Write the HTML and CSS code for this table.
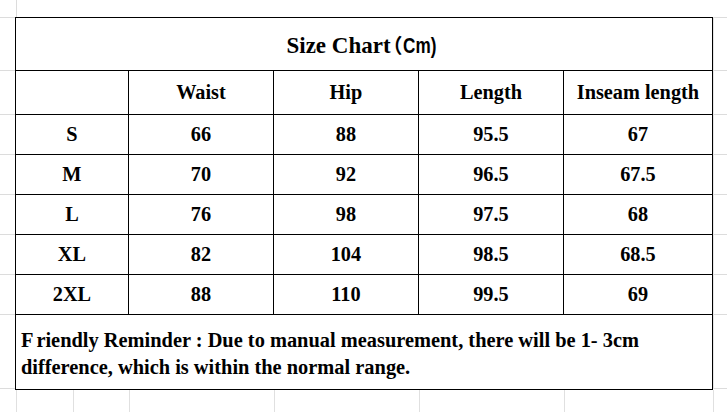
FILE: index.html
```html
<!DOCTYPE html>
<html lang="en">

<head>
    <meta charset="UTF-8">
    <meta name="viewport" content="width=device-width, initial-scale=1.0">
    <title>Size Chart</title>
    <link rel="stylesheet" href="styles.css">
</head>

<body>
    <div class="sheet">
        <div class="top-strip">
            <div class="gap"></div>
            <div class="line"></div>
        </div>

        <div class="middle">
            <div class="gutter left">
                <div class="g title-h"></div>
                <div class="g head-h"></div>
                <div class="g row-h"></div>
                <div class="g row-h"></div>
                <div class="g row-h"></div>
                <div class="g row-h"></div>
                <div class="g row-h"></div>
                <div class="g note-h"></div>
            </div>

            <table class="chart">
                <colgroup>
                    <col class="c-size">
                    <col class="c-val">
                    <col class="c-val">
                    <col class="c-val">
                    <col class="c-last">
                </colgroup>
                <tr class="title-row">
                    <td colspan="5">Size Chart<span class="paren">（</span><span class="unit">Cm)</span></td>
                </tr>
                <tr class="head-row">
                    <td></td>
                    <td>Waist</td>
                    <td>Hip</td>
                    <td>Length</td>
                    <td>Inseam length</td>
                </tr>
                <tr class="data-row">
                    <td>S</td><td>66</td><td>88</td><td>95.5</td><td>67</td>
                </tr>
                <tr class="data-row">
                    <td>M</td><td>70</td><td>92</td><td>96.5</td><td>67.5</td>
                </tr>
                <tr class="data-row">
                    <td>L</td><td>76</td><td>98</td><td>97.5</td><td>68</td>
                </tr>
                <tr class="data-row">
                    <td>XL</td><td>82</td><td>104</td><td>98.5</td><td>68.5</td>
                </tr>
                <tr class="data-row">
                    <td>2XL</td><td>88</td><td>110</td><td>99.5</td><td>69</td>
                </tr>
                <tr class="note-row">
                    <td colspan="5"><span class="f">F</span>riendly Reminder : Due to manual measurement, there will be 1- 3cm<br>difference, which is within the normal range.</td>
                </tr>
            </table>

            <div class="gutter right">
                <div class="g title-h"></div>
                <div class="g head-h"></div>
                <div class="g row-h"></div>
                <div class="g row-h"></div>
                <div class="g row-h"></div>
                <div class="g row-h"></div>
                <div class="g row-h"></div>
                <div class="g note-h"></div>
            </div>
        </div>

        <div class="bottom-strip">
            <div class="cell w0"></div>
            <div class="cell w1"></div>
            <div class="cell w2"></div>
            <div class="cell w3"></div>
            <div class="cell w3"></div>
            <div class="cell w3"></div>
            <div class="cell w4"></div>
            <div class="cell w5"></div>
        </div>
    </div>
</body>

</html>
```

FILE: styles.css
```css
body {
    margin: 0;
    background: #fff;
    font-family: 'Liberation Serif', 'Times New Roman', serif;
    color: #000;
}

.sheet {
    width: 727px;
    height: 412px;
    overflow: hidden;
}

.top-strip {
    display: flex;
    height: 17px;
}

.top-strip .gap {
    width: 16px;
}

.top-strip .line {
    border-left: 1px solid #dcdcdc;
}

.middle {
    display: flex;
    align-items: flex-start;
}

.gutter {
    display: flex;
    flex-direction: column;
}

.gutter.left {
    width: 16px;
}

.gutter.right {
    width: 14px;
    border-left: 1px solid #e4e4e4;
}

.g {
    box-sizing: border-box;
    border-top: 1px solid #dcdcdc;
}

.g.note-h {
    border-bottom: 1px solid #dcdcdc;
}

.title-h {
    height: 53px;
}

.head-h {
    height: 44px;
}

.row-h {
    height: 40px;
}

.note-h {
    height: 75px;
}

.chart {
    border-collapse: collapse;
    table-layout: fixed;
    width: 698px;
    font-weight: bold;
    font-size: 20.3px;
}

.c-size {
    width: 113px;
}

.c-val {
    width: 145px;
}

.c-last {
    width: 149px;
}

.chart td {
    border: 1px solid #000;
    text-align: center;
    vertical-align: middle;
    padding: 0;
}

.title-row td {
    height: 52px;
    font-size: 23px;
    padding-left: 4px;
}

.paren {
    font-family: 'Noto Sans CJK SC', sans-serif;
    font-weight: bold;
    font-size: 20px;
    font-feature-settings: "halt";
    margin-left: 2px;
}

.unit {
    font-family: 'Liberation Sans', sans-serif;
    font-weight: bold;
    font-size: 22px;
    display: inline-block;
    transform: scaleX(0.78);
    transform-origin: left center;
}

.head-row td {
    height: 43px;
}

.data-row td {
    height: 39px;
}

.note-row td {
    height: 75px;
    box-sizing: border-box;
    text-align: left;
    vertical-align: top;
    padding: 12px 0 0 5px;
    line-height: 27px;
    font-size: 20.4px;
}

.f {
    letter-spacing: 3px;
}

.bottom-strip {
    display: flex;
    height: 30px;
}

.cell {
    border-left: 1px solid #e0e0e0;
}

.w0 {
    width: 16px;
    border-left: none;
}

.w1 {
    width: 56px;
}

.w2 {
    width: 55px;
}

.w3 {
    width: 144px;
}

.w4 {
    width: 148px;
}

.w5 {
    width: 13px;
}
```
